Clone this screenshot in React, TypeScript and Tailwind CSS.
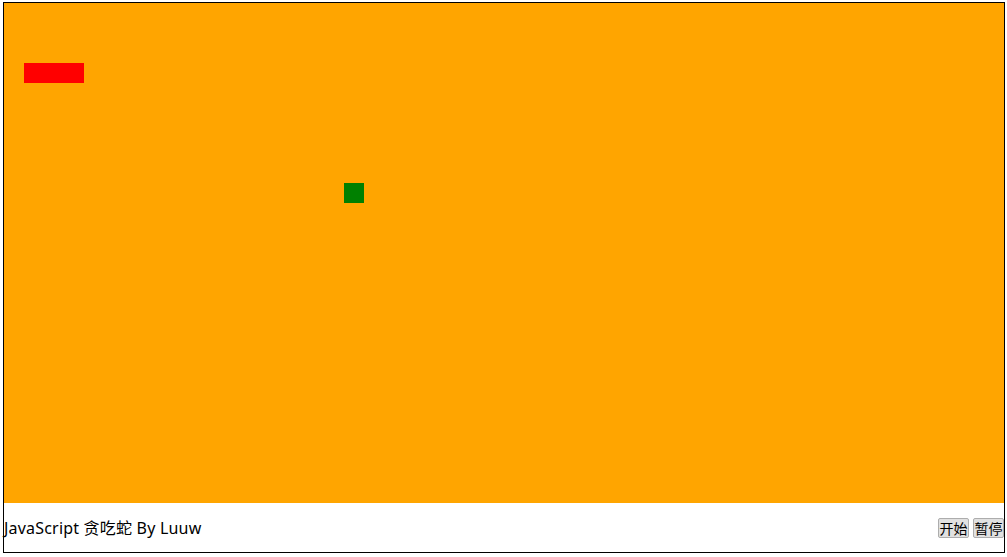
import React from 'react'

const CELL = 20

const snake = [
    { x: 1, y: 3 },
    { x: 2, y: 3 },
    { x: 3, y: 3 },
]
const food = { x: 17, y: 9 }

const App = () => {
    return (
        <div className="ml-[3px] mt-[2px] w-[1002px] border border-black bg-white font-['Noto_Sans','Noto_Sans_CJK_SC',sans-serif] text-black">

            {/* Board */}
            <div className="relative h-[500px] w-[1000px] bg-[#ffa500]">
                {snake.map((s, i) => (
                    <div
                        key={i}
                        className="absolute h-5 w-5 bg-[#ff0000]"
                        style={{ left: s.x * CELL, top: s.y * CELL }}
                    />
                ))}
                <div
                    className="absolute h-5 w-5 bg-[#008000]"
                    style={{ left: food.x * CELL, top: food.y * CELL }}
                />
            </div>

            {/* Footer */}
            <div className="flex h-[49px] items-center justify-between">
                <span className="text-[16px] leading-5 tracking-[0.2px]">JavaScript 贪吃蛇 By Luuw</span>
                <div className="mt-[1px] flex gap-[4px]">
                    <button className="h-5 w-[31px] rounded-[2px] border border-[#adadad] bg-[#e1e1e1] text-[14px] leading-none font-['Noto_Sans_CJK_SC',sans-serif]">开始</button>
                    <button className="h-5 w-[31px] rounded-[2px] border border-[#adadad] bg-[#e1e1e1] text-[14px] leading-none font-['Noto_Sans_CJK_SC',sans-serif]">暂停</button>
                </div>
            </div>
        </div>
    )
}

export default App
